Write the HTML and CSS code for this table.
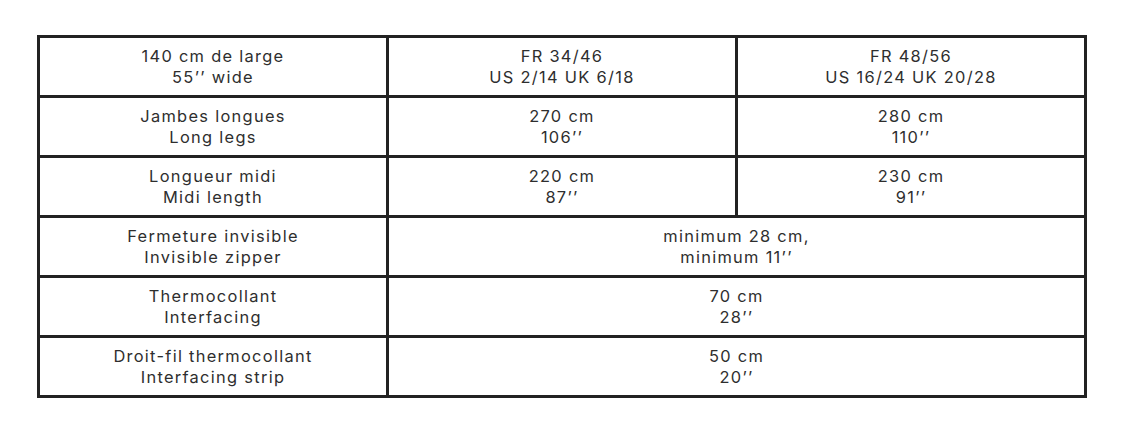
FILE: index.html
```html
<!DOCTYPE html>
<html lang="fr">
<head>
<meta charset="utf-8">
<title>Métrage</title>
<link rel="stylesheet" href="styles.css">
</head>
<body>
<div class="page">
  <table class="sizes">
    <tr>
      <td>140 cm de large<br>55’’ wide</td>
      <td>FR 34/46<br>US 2/14 UK 6/18</td>
      <td>FR 48/56<br>US 16/24 UK 20/28</td>
    </tr>
    <tr>
      <td>Jambes longues<br>Long legs</td>
      <td>270 cm<br>106’’</td>
      <td>280 cm<br>110’’</td>
    </tr>
    <tr>
      <td>Longueur midi<br>Midi length</td>
      <td>220 cm<br>87’’</td>
      <td>230 cm<br>91’’</td>
    </tr>
    <tr>
      <td>Fermeture invisible<br>Invisible zipper</td>
      <td colspan="2">minimum 28 cm,<br>minimum 11’’</td>
    </tr>
    <tr>
      <td>Thermocollant<br>Interfacing</td>
      <td colspan="2">70 cm<br>28’’</td>
    </tr>
    <tr>
      <td>Droit-fil thermocollant<br>Interfacing strip</td>
      <td colspan="2">50 cm<br>20’’</td>
    </tr>
  </table>
</div>
</body>
</html>
```
FILE: styles.css
```css
html, body {
  margin: 0;
  padding: 0;
  background: #fff;
}
.page {
  padding: 35px 0 0 37px;
}
.sizes {
  border-collapse: separate;
  border-spacing: 0;
  border-top: 3px solid #222;
  border-left: 3px solid #222;
  table-layout: fixed;
  width: 1050px;
  font-family: Inter, Lato, "Liberation Sans", sans-serif;
  font-size: 16.4px;
  font-weight: 400;
  letter-spacing: 1.3px;
  line-height: 21px;
  color: #2e2e2e;
}
.sizes td {
  width: 346px;
  height: 57px;
  padding: 0;
  box-sizing: content-box;
  border-right: 3px solid #222;
  border-bottom: 3px solid #222;
  text-align: center;
  vertical-align: middle;
}
```
